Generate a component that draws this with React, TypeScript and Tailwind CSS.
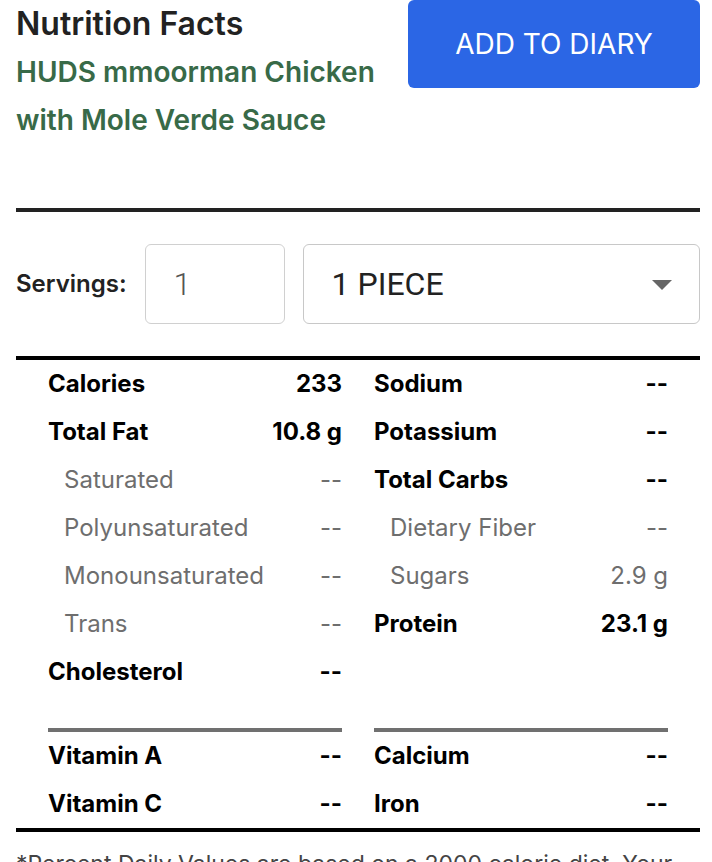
import { useState } from "react";

type Row = { label: string; value: string; sub?: boolean };

const leftRows: Row[] = [
  { label: "Calories", value: "233" },
  { label: "Total Fat", value: "10.8 g" },
  { label: "Saturated", value: "--", sub: true },
  { label: "Polyunsaturated", value: "--", sub: true },
  { label: "Monounsaturated", value: "--", sub: true },
  { label: "Trans", value: "--", sub: true },
  { label: "Cholesterol", value: "--" },
];

const rightRows: Row[] = [
  { label: "Sodium", value: "--" },
  { label: "Potassium", value: "--" },
  { label: "Total Carbs", value: "--" },
  { label: "Dietary Fiber", value: "--", sub: true },
  { label: "Sugars", value: "2.9 g", sub: true },
  { label: "Protein", value: "23.1 g" },
];

function NutrientRow({ row }: { row: Row }) {
  return (
    <div
      className={
        row.sub
          ? "flex h-12 items-center justify-between pl-4 text-[24px] font-normal text-[#6e6e6e]"
          : "flex h-12 items-center justify-between text-[24px] font-bold text-black"
      }
    >
      <span>{row.label}</span>
      <span>{row.value}</span>
    </div>
  );
}

export default function App() {
  const [servings, setServings] = useState("1");
  const [unit, setUnit] = useState("1 PIECE");

  return (
    <div className="overflow-hidden bg-white pl-4 pr-3 font-['Inter',sans-serif] text-[#222]">
      <div className="flex justify-between">
        <div>
          <h1 className="text-[32px] font-semibold leading-[48px] text-[#222]">
            Nutrition Facts
          </h1>
          <p className="text-[28px] font-semibold leading-[48px] text-[#386a48]">
            HUDS mmoorman Chicken
            <br />
            with Mole Verde Sauce
          </p>
        </div>
        <button className="h-[88px] w-[292px] rounded-md bg-[#2b66e5] text-[28px] font-normal text-white">
          ADD TO DIARY
        </button>
      </div>

      <div className="mt-16 h-1 bg-[#222]" />

      <div className="flex items-center gap-[18px] py-8">
        <label className="text-[24px] font-semibold text-[#222]">Servings:</label>
        <input
          value={servings}
          onChange={(e) => setServings(e.target.value)}
          className="h-20 w-[140px] rounded-md border border-[#d0d0d0] px-7 font-['Roboto',sans-serif] text-[32px] font-light text-[#555] outline-none"
        />
        <div className="relative flex-1">
          <select
            value={unit}
            onChange={(e) => setUnit(e.target.value)}
            className="h-20 w-full appearance-none rounded-md border border-[#c8c8c8] bg-white px-7 font-['Roboto',sans-serif] text-[32px] text-[#222] outline-none"
          >
            <option>1 PIECE</option>
          </select>
          <svg
            className="pointer-events-none absolute right-[28px] top-[36px]"
            width="20"
            height="10"
            viewBox="0 0 20 10"
          >
            <path d="M0 0 L20 0 L10 10 Z" fill="#666" />
          </svg>
        </div>
      </div>

      <div className="h-1 bg-black" />

      <div className="grid grid-cols-2 gap-x-8 px-8">
        <div>
          {leftRows.map((r) => (
            <NutrientRow key={r.label} row={r} />
          ))}
        </div>
        <div>
          {rightRows.map((r) => (
            <NutrientRow key={r.label} row={r} />
          ))}
        </div>

        <div className="mt-8">
          <div className="h-1 bg-[#707070]" />
          <NutrientRow row={{ label: "Vitamin A", value: "--" }} />
          <NutrientRow row={{ label: "Vitamin C", value: "--" }} />
        </div>
        <div className="mt-8">
          <div className="h-1 bg-[#707070]" />
          <NutrientRow row={{ label: "Calcium", value: "--" }} />
          <NutrientRow row={{ label: "Iron", value: "--" }} />
        </div>
      </div>

      <div className="h-1 bg-black" />

      <p className="mt-4 text-[23px] leading-8 text-[#444]">
        *Percent Daily Values are based on a 2000 calorie diet. Your daily values may be higher or lower depending on your calorie needs.
      </p>
    </div>
  );
}
